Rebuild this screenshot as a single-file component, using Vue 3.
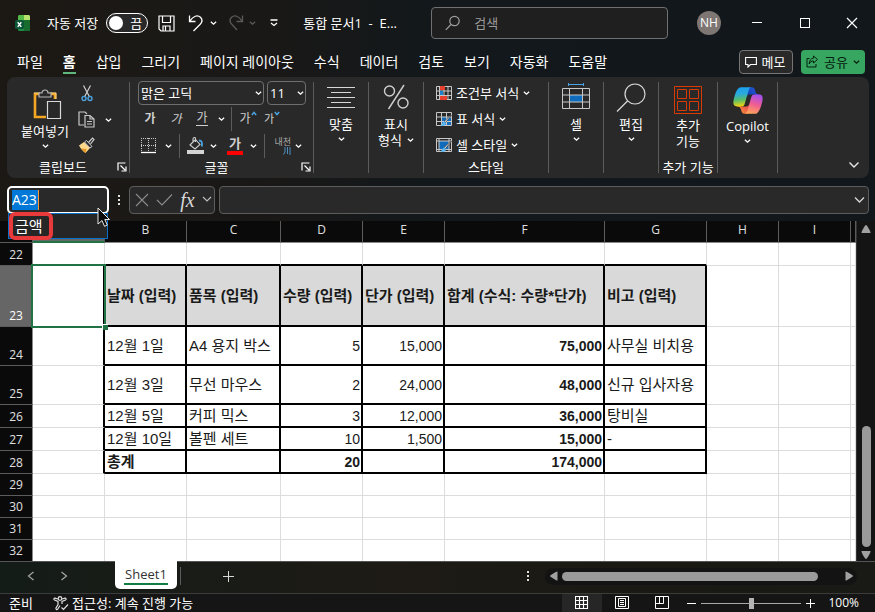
<script setup>
import { ref } from 'vue'

const tabs = ['파일', '홈', '삽입', '그리기', '페이지 레이아웃', '수식', '데이터', '검토', '보기', '자동화', '도움말']
const activeTab = ref('홈')
const autosave = ref(false)
const nameBox = ref('A23')
const formula = ref('')
const search = ref('')
const zoom = ref(50)

const columns = ['A', 'B', 'C', 'D', 'E', 'F', 'G', 'H', 'I', '']
const rows = [
  { n: 22, size: 'mid', cells: [] },
  { n: 23, size: 'tall', kind: 'head', cells: ['날짜 (입력)', '품목 (입력)', '수량 (입력)', '단가 (입력)', '합계 (수식: 수량*단가)', '비고 (입력)'] },
  { n: 24, size: 'high', kind: 'data', cells: ['12월 1일', 'A4 용지 박스', '5', '15,000', '75,000', '사무실 비치용'] },
  { n: 25, size: 'high', kind: 'data', cells: ['12월 3일', '무선 마우스', '2', '24,000', '48,000', '신규 입사자용'] },
  { n: 26, size: 'mid', kind: 'data', cells: ['12월 5일', '커피 믹스', '3', '12,000', '36,000', '탕비실'] },
  { n: 27, size: 'mid', kind: 'data', cells: ['12월 10일', '볼펜 세트', '10', '1,500', '15,000', '-'] },
  { n: 28, size: 'mid', kind: 'total', cells: ['총계', '', '20', '', '174,000', ''] },
  { n: 29, size: 'low', cells: [] },
  { n: 30, size: 'low', cells: [] },
  { n: 31, size: 'low', cells: [] },
  { n: 32, size: 'low', cells: [] }
]

function cellClass(row, i) {
  const inTable = row.kind && i >= 1 && i <= 6
  return {
    boxed: inTable,
    'edge-right': row.kind && i === 0,
    'edge-bottom': row.n === 22 && i >= 1 && i <= 6,
    shaded: inTable && row.kind === 'head',
    num: inTable && row.kind !== 'head' && i >= 3 && i <= 5,
    bold: inTable && (row.kind !== 'data' || i === 5)
  }
}
</script>

<template>
  <div class="window">
    <svg class="defs" aria-hidden="true">
      <symbol id="chev" viewBox="0 0 8 6"><path d="M1 1.500 4 4.300 7 1.500" fill="none" stroke="currentColor" stroke-width="1.500" /></symbol>
      <symbol id="launch" viewBox="0 0 10 10"><path d="M1 8.500V1H8.500M3.500 3.500 8 8M9 4.500V9H4.500" fill="none" stroke="currentColor" stroke-width="1.200" /></symbol>
      <symbol id="brush" viewBox="0 0 12 12"><path d="M11.500.5 5.500 7.500 4 6.500 10 .8z" fill="#d6d6d6" stroke="#292929" stroke-width=".6" /><path d="M4.500 6.500C2.500 6.500 2.500 9 .5 10.500c2.500 1 5.500 0 5.500-2.500z" fill="#5bb5f0" /></symbol>
    </svg>

    <header class="titlebar">
      <svg class="logo" viewBox="0 0 16 16" aria-hidden="true">
        <rect x="3" y="0" width="12" height="16" rx="1.500" fill="#1f8a43" />
        <path d="M4.500 0H9v5H3V1.500A1.500 1.500 0 0 1 4.500 0Z" fill="#55b947" />
        <path d="M9 0h4.500A1.500 1.500 0 0 1 15 1.500V5H9Z" fill="#b6e36b" />
        <path d="M9 5h6v9.500a1.500 1.500 0 0 1-1.500 1.500H9Z" fill="#176c2e" />
        <rect x="0" y="5" width="9" height="9" rx="1.500" fill="#0c5638" />
        <path d="m2.700 7.300 3.600 4.600M6.300 7.300l-3.600 4.600" stroke="#fff" stroke-width="1.400" />
      </svg>
      <label class="autosave">
        <span>자동 저장</span>
        <input v-model="autosave" type="checkbox" />
        <span class="toggle"><i></i>끔</span>
      </label>
      <button class="ic save" aria-label="저장">
        <svg width="17" height="17" viewBox="0 0 17 17"><path d="M1 1h15v15H3l-2-2zM4.500 1v6.500h8V1M5 16v-5h7v5M7.500 11v5" fill="none" stroke="currentColor" stroke-width="1.200" /></svg>
      </button>
      <button class="ic undo" aria-label="실행 취소">
        <svg width="17" height="18" viewBox="0 0 17 18"><path d="M1.500 1.500v6h6M1.800 7.200C5 2 9.500.5 12.500 3.300c2.500 2.700 1.500 5.200-.5 7.200L5.500 17" fill="none" stroke="currentColor" stroke-width="1.300" /></svg>
      </button>
      <button class="ic drop" aria-label="실행 취소 목록"><svg class="chev"><use href="#chev" /></svg></button>
      <button class="ic undo faded" aria-label="다시 실행">
        <svg width="17" height="18" viewBox="0 0 17 18"><path d="M15.500 1.500v6h-6M15.200 7.200C12 2 7.500.5 4.500 3.300 2 6 3 8.500 5 10.500l5 5.500" fill="none" stroke="currentColor" stroke-width="1.300" /></svg>
      </button>
      <button class="ic drop faded" aria-label="다시 실행 목록"><svg class="chev"><use href="#chev" /></svg></button>
      <button class="ic qat" aria-label="빠른 실행 도구 모음 사용자 지정">
        <svg width="10" height="8" viewBox="0 0 10 8"><path d="M1.500 1h7M2 4l3 2.500L8 4" fill="none" stroke="currentColor" stroke-width="1.300" /></svg>
      </button>
      <h1>통합 문서1&nbsp; -&nbsp; E...</h1>
      <label class="search">
        <svg width="16" height="16" viewBox="0 0 16 16" aria-hidden="true"><circle cx="9.500" cy="6" r="4.700" fill="none" stroke="#a0a0a0" stroke-width="1.200" /><path d="M6 9.500.8 14.800" stroke="#a0a0a0" stroke-width="1.200" /></svg>
        <input v-model="search" type="text" placeholder="검색" aria-label="검색" />
      </label>
      <button class="avatar" aria-label="계정">NH</button>
      <nav class="wincontrols">
        <button aria-label="최소화"><svg width="12" height="12" viewBox="0 0 12 12"><path d="M1 5.500h10" stroke="#fff" /></svg></button>
        <button aria-label="최대화"><svg width="12" height="12" viewBox="0 0 12 12"><rect x="1.500" y="1.500" width="9" height="9" fill="none" stroke="#fff" /></svg></button>
        <button aria-label="닫기"><svg width="12" height="12" viewBox="0 0 12 12"><path d="m1 1 10 10M11 1 1 11" stroke="#fff" stroke-width="1.200" /></svg></button>
      </nav>
    </header>

    <div class="tabrow">
      <nav class="tabs">
        <button v-for="t in tabs" :key="t" :class="{ active: t === activeTab }" @click="activeTab = t">{{ t }}</button>
      </nav>
      <button class="pill memo">
        <svg width="12" height="12" viewBox="0 0 12 12" aria-hidden="true"><path d="M.6 1.500h10.800v7H5.500L3 11V8.500H.6z" fill="none" stroke="currentColor" stroke-width="1.100" /></svg>
        메모
      </button>
      <button class="pill share">
        <svg width="13" height="13" viewBox="0 0 13 13" aria-hidden="true"><path d="M3.500 3.500H1v8.500h9V9M7.500 1l4 3.500-4 3.500V6C5.500 6 4 7 3.200 9c0-3.500 2-5.700 4.300-5.900z" fill="none" stroke="currentColor" /></svg>
        공유
        <svg class="chev"><use href="#chev" /></svg>
      </button>
    </div>

    <section class="ribbon">
      <div class="group clipboard">
        <div class="body">
          <button class="big paste">
            <svg width="30" height="32" viewBox="0 0 30 32" aria-hidden="true">
              <path d="M2 5h20v23H2z" fill="none" stroke="#f5a623" stroke-width="2.600" />
              <path d="M1 4h6M17 4h6v7" fill="none" stroke="#ffd98c" />
              <path d="M14 11h15v20H14z" fill="#292929" stroke="#292929" stroke-width="2" />
              <path d="M6 8V4h3c0-4 6-4 6 0h3v4z" fill="#292929" stroke="#b5b5b5" stroke-width="1.200" />
              <path d="M14.500 12.500h13v17h-13z" fill="#292929" stroke="#d8d8d8" stroke-width="1.200" />
            </svg>
            <span>붙여넣기</span>
            <svg class="chev"><use href="#chev" /></svg>
          </button>
          <div class="clipcol">
            <button class="ic" aria-label="잘라내기">
              <svg width="12" height="17" viewBox="0 0 12 17"><path d="m2.500.5 5.800 11M9.500.5 3.700 11.500" stroke="#d0d0d0" stroke-width="1.200" /><circle cx="3" cy="13.500" r="2" fill="none" stroke="#4aa3e0" stroke-width="1.400" /><circle cx="9" cy="13.500" r="2" fill="none" stroke="#4aa3e0" stroke-width="1.400" /></svg>
            </button>
            <div class="row">
              <button class="ic" aria-label="복사">
                <svg width="17" height="17" viewBox="0 0 17 17"><path d="M6 14H1V1h6l2 2M7 4.500h5l4 3.500v8H7zM12 4.500V8h4M9 10.500h5M9 13h5" fill="none" stroke="#c8c8c8" stroke-width="1.200" /></svg>
              </button>
              <button class="ic" aria-label="복사 옵션"><svg class="chev"><use href="#chev" /></svg></button>
            </div>
            <button class="ic" aria-label="서식 복사">
              <svg width="17" height="17" viewBox="0 0 17 17"><path d="M1 8.500 6 5l6 6-4.500 5C6 15 2.500 12 1 8.500Z" fill="#fbd98a" /><path d="M3 11.500 8.500 12 7.500 16Z" fill="#e6951f" /><path d="m6.500 5 2-1.500 5.500 6-2 1.500z" fill="#292929" stroke="#d0d0d0" /><path d="m10.500 5.500 4-4.500 1.500 1.500-3.500 4.500" fill="none" stroke="#d0d0d0" stroke-width="1.200" /></svg>
            </button>
          </div>
        </div>
        <footer><span>클립보드</span><button aria-label="클립보드 옵션"><svg width="10" height="10"><use href="#launch" /></svg></button></footer>
      </div>

      <div class="group font">
        <div class="fontrows">
          <div class="row selects">
            <div class="pick family"><select aria-label="글꼴"><option>맑은 고딕</option></select><svg class="chev"><use href="#chev" /></svg></div>
            <div class="pick size"><select aria-label="글꼴 크기"><option>11</option></select><svg class="chev"><use href="#chev" /></svg></div>
          </div>
          <div class="row tools">
            <button class="ic w26 b" aria-label="굵게">가</button>
            <button class="ic w26 i" aria-label="기울임꼴">가</button>
            <button class="ic w26 u" aria-label="밑줄"><span>가</span></button>
            <button class="ic w12" aria-label="밑줄 옵션"><svg class="chev"><use href="#chev" /></svg></button>
            <hr />
            <button class="ic w24 grow" aria-label="글꼴 크기 크게"><span>가</span><svg class="mark" viewBox="0 0 6 5"><path d="m.8 4 2.200-2.500L5.200 4" fill="none" stroke="#4aa3e0" stroke-width="1.500" /></svg></button>
            <button class="ic w24 shrink" aria-label="글꼴 크기 작게"><span>가</span><svg class="mark" viewBox="0 0 6 5"><path d="m.8 1 2.200 2.500L5.200 1" fill="none" stroke="#4aa3e0" stroke-width="1.500" /></svg></button>
          </div>
          <div class="row tools">
            <button class="ic w24" aria-label="테두리">
              <svg width="16" height="16" viewBox="0 0 16 16"><path d="M0 .5h15M0 7.500h15M.5 0v14M7.500 0v14M14.500 0v14" stroke="#c8c8c8" stroke-dasharray="1 1" /><path d="M0 14.500h15" stroke="#fff" stroke-width="1.300" /></svg>
            </button>
            <button class="ic w14" aria-label="테두리 옵션"><svg class="chev"><use href="#chev" /></svg></button>
            <hr />
            <button class="ic w22" aria-label="채우기 색">
              <svg width="17" height="18" viewBox="0 0 17 18"><path d="M3 8 8.500 2.500 13 7.500 8 12zM8.500 5V1.500C8.500 0 6 .3 6 2v3" fill="none" stroke="#d0d0d0" stroke-width="1.100" /><path d="M12 3.500c2.800 0 3.500 2 2.800 6" fill="none" stroke="#4aa3e0" stroke-width="1.800" /><path d="M0 13h17v4H0z" fill="#d4d4d4" /></svg>
            </button>
            <button class="ic w14" aria-label="채우기 색 옵션"><svg class="chev"><use href="#chev" /></svg></button>
            <button class="ic fontcolor" aria-label="글꼴 색"><span>가</span></button>
            <button class="ic w14" aria-label="글꼴 색 옵션"><svg class="chev"><use href="#chev" /></svg></button>
            <hr />
            <button class="ic w22 ruby" aria-label="윗주 필드"><span>내천</span><svg width="8" height="8" viewBox="0 0 8 8"><path d="M2 0v5L.5 7.500M4.500 0v7M7 0v8" fill="none" stroke="#4a8fc0" /></svg></button>
            <button class="ic w14" aria-label="윗주 옵션"><svg class="chev"><use href="#chev" /></svg></button>
          </div>
        </div>
        <footer><span>글꼴</span><button aria-label="글꼴 옵션"><svg width="10" height="10"><use href="#launch" /></svg></button></footer>
      </div>

      <div class="group narrow">
        <button class="big">
          <svg width="28" height="30" viewBox="0 0 28 30" aria-hidden="true"><path d="M0 5.500h28M4 10.500h20M0 15.500h28M4 20.500h20M0 25.500h28" stroke="#d8d8d8" /></svg>
          <span>맞춤</span><svg class="chev"><use href="#chev" /></svg>
        </button>
      </div>
      <div class="group narrow">
        <button class="big">
          <svg width="28" height="30" viewBox="0 0 28 30" aria-hidden="true"><g fill="none" stroke="#cfcfcf" stroke-width="1.400"><circle cx="7.500" cy="9" r="5" /><circle cx="21" cy="21" r="5" /><path d="M22 3 6.500 27" /></g></svg>
          <span>표시</span><span class="line">형식<svg class="chev"><use href="#chev" /></svg></span>
        </button>
      </div>

      <div class="group styles">
        <div class="stylelist">
          <button>
            <svg width="16" height="15" viewBox="0 0 16 15" aria-hidden="true"><path d="M.5.5h15v13H.5zM.5 5h15M.5 9.500h15M3.500.5v13M8 .5v13M12 .5v13" fill="none" stroke="#c8c8c8" /><path d="M4 0h5v4H4zM4 10h7v4H4z" fill="#e8402f" /><path d="M4 5h3v4H4z" fill="#1c7fd0" /></svg>
            조건부 서식<svg class="chev"><use href="#chev" /></svg>
          </button>
          <button>
            <svg width="16" height="15" viewBox="0 0 16 15" aria-hidden="true"><path d="M6 5h9v9H6z" fill="#0f6cbd" /><path d="M.5.5h15v13H.5zM.5 5h15M.5 9.500h15M5.500.5v13M10.500.5v13" fill="none" stroke="#c8c8c8" /><svg x="4" y="3" width="12" height="12"><use href="#brush" /></svg></svg>
            표 서식<svg class="chev"><use href="#chev" /></svg>
          </button>
          <button>
            <svg width="16" height="15" viewBox="0 0 16 15" aria-hidden="true"><path d="M3 3h10v9H3z" fill="#0f6cbd" /><path d="M.5.5h15v13H.5zM.5 3h15M.5 11.500h15M3 .5v13M13 .5v13" fill="none" stroke="#c8c8c8" /><svg x="4" y="3" width="12" height="12"><use href="#brush" /></svg></svg>
            셀 스타일<svg class="chev"><use href="#chev" /></svg>
          </button>
        </div>
        <footer><span>스타일</span></footer>
      </div>

      <div class="group narrow">
        <button class="big">
          <svg width="28" height="30" viewBox="0 0 28 30" aria-hidden="true"><path d="M6.500 1v3M21.500 1v3M6.500 2.500h15" stroke="#4aa3e0" fill="none" /><path d="M7 13h14v7H7z" fill="#0f6cbd" /><path d="M.5 6.500h27v20H.5zM.5 13h27M.5 20h27M7.500 6.500v20M20.500 6.500v20" fill="none" stroke="#c8c8c8" /></svg>
          <span>셀</span><svg class="chev"><use href="#chev" /></svg>
        </button>
      </div>
      <div class="group narrow">
        <button class="big">
          <svg width="30" height="30" viewBox="0 0 30 30" aria-hidden="true"><g fill="none" stroke="#d8d8d8" stroke-width="1.200"><circle cx="19" cy="12" r="10" /><path d="M11.500 19 1 29.500" /></g></svg>
          <span>편집</span><svg class="chev"><use href="#chev" /></svg>
        </button>
      </div>
      <div class="group addins">
        <button class="big lower">
          <svg width="28" height="28" viewBox="0 0 28 28" aria-hidden="true"><path d="M.5.5h27v27H.5zM3.500 3.500h9v9h-9zM15.500 3.500h9v9h-9zM3.500 15.500h9v9h-9zM15.500 15.500h9v9h-9z" fill="none" stroke="#d83b01" /></svg>
          <span class="two">추가<br />기능</span>
        </button>
        <footer><span>추가 기능</span></footer>
      </div>
      <div class="group copilot">
        <button class="big lower">
          <svg width="32" height="29" viewBox="0 3 48 42" aria-hidden="true">
            <defs>
              <linearGradient id="cpA" x1="0.300" y1="0" x2="0.400" y2="1"><stop offset="0" stop-color="#1aa0ee" /><stop offset=".35" stop-color="#2aa9dd" /><stop offset=".65" stop-color="#55bc6c" /><stop offset="1" stop-color="#f3d60a" /></linearGradient>
              <linearGradient id="cpB" x1="0.700" y1="0" x2="0.400" y2="1"><stop offset="0" stop-color="#a34ff0" /><stop offset=".5" stop-color="#ef5d93" /><stop offset="1" stop-color="#ffa45c" /></linearGradient>
              <linearGradient id="cpC" x1="1" y1="0" x2="0" y2="1"><stop offset="0" stop-color="#2a5be0" /><stop offset="1" stop-color="#0a3ca8" /></linearGradient>
              <linearGradient id="cpD" x1="0" y1="1" x2="1" y2="0"><stop offset="0" stop-color="#f9a03a" /><stop offset="1" stop-color="#e5344f" /></linearGradient>
            </defs>
            <path fill="url(#cpC)" d="M34.142 7.325A4.630 4.630 0 0 0 29.700 4H28.350a4.630 4.630 0 0 0-4.554 3.794L21.480 20.407l.575-1.965a4.630 4.630 0 0 1 4.444-3.330h7.853l3.294 1.282 3.175-1.283h-.926a4.630 4.630 0 0 1-4.443-3.325Z" />
            <path fill="url(#cpD)" d="M14.330 40.656A4.630 4.630 0 0 0 18.779 44h2.870a4.630 4.630 0 0 0 4.629-4.510l.312-12.163-.654 2.233a4.630 4.630 0 0 1-4.443 3.329h-7.919l-2.823-1.532-3.057 1.532h.912a4.630 4.630 0 0 1 4.447 3.344Z" />
            <path fill="url(#cpA)" d="M29.500 4H13.460c-4.583 0-7.332 6.057-9.165 12.113C2.123 23.290-.72 32.885 7.503 32.885h6.925a4.630 4.630 0 0 0 4.456-3.358 2078 2078 0 0 1 4.971-17.156c.843-2.843 1.544-5.284 2.621-6.805C27.080 4.714 28.086 4 29.500 4Z" />
            <path fill="url(#cpB)" d="M18.498 44h16.040c4.582 0 7.332-6.058 9.165-12.115 2.171-7.177 5.013-16.775-3.208-16.775h-6.926a4.630 4.630 0 0 0-4.455 3.358 2084 2084 0 0 1-4.972 17.160c-.842 2.843-1.544 5.285-2.620 6.806-.604.852-1.610 1.566-3.024 1.566Z" />
          </svg>
          <span>Copilot</span><svg class="chev"><use href="#chev" /></svg>
        </button>
      </div>
      <button class="collapse" aria-label="리본 축소"><svg width="12" height="8" viewBox="0 0 12 8"><path d="m1.500 1.500 4.500 4.500 4.500-4.500" fill="none" stroke="#e8e8e8" stroke-width="1.400" /></svg></button>
    </section>

    <div class="formulabar">
      <div class="namebox">
        <input v-model="nameBox" type="text" aria-label="이름 상자" />
        <ul class="names">
          <li>금액</li>
        </ul>
        <svg class="pointer" width="14" height="21" viewBox="0 0 14 21" aria-hidden="true"><path d="M1 1v16l4-3.500 2.500 5.800 2.800-1.200L7.800 12.500H12.500z" fill="#0a0a0a" stroke="#e8e8e8" /></svg>
      </div>
      <span class="dots"><i></i><i></i><i></i></span>
      <div class="fx">
        <button aria-label="취소"><svg width="14" height="14" viewBox="0 0 14 14"><path d="m1 1 12 12M13 1 1 13" stroke="#8c8c8c" stroke-width="1.100" /></svg></button>
        <button aria-label="입력"><svg width="17" height="14" viewBox="0 0 17 14"><path d="m1 7 5 5L16 1.500" fill="none" stroke="#8c8c8c" stroke-width="1.100" /></svg></button>
        <button class="fn" aria-label="함수 삽입">fx</button>
        <button aria-label="함수 목록"><svg width="10" height="7" viewBox="0 0 10 7"><path d="m1 1 4 4 4-4" fill="none" stroke="#c0c0c0" stroke-width="1.100" /></svg></button>
      </div>
      <div class="formula">
        <input v-model="formula" type="text" aria-label="수식 입력줄" />
        <button aria-label="수식 입력줄 확장"><svg width="11" height="8" viewBox="0 0 11 8"><path d="m1 1.500 4.500 4.500L10 1.500" fill="none" stroke="#d8d8d8" stroke-width="1.300" /></svg></button>
      </div>
    </div>

    <main class="sheet">
      <div class="cells">
        <table>
          <colgroup>
            <col class="c-n" /><col class="c-a" /><col class="c-b" /><col class="c-c" /><col class="c-b" /><col class="c-b" /><col class="c-f" /><col class="c-g" /><col class="c-a" /><col class="c-a" /><col />
          </colgroup>
          <thead>
            <tr>
              <td class="corner"></td>
              <th v-for="(c, i) in columns" :key="i" scope="col" :class="{ on: i === 0 }">{{ c }}</th>
            </tr>
          </thead>
          <tbody>
            <tr v-for="r in rows" :key="r.n" :class="r.size">
              <th scope="row" :class="{ on: r.n === 23 }">{{ r.n }}</th>
              <td v-for="(c, i) in columns" :key="i" :class="cellClass(r, i)">
                <template v-if="i > 0">{{ r.cells[i - 1] }}</template>
                <span v-else-if="r.n === 23" class="selection"></span>
              </td>
            </tr>
          </tbody>
        </table>
      </div>
      <div class="vscroll">
        <button aria-label="위로"><svg width="10" height="8" viewBox="0 0 10 8"><path d="M5 0c1 0 5 7 4.500 8h-9C0 7 4 0 5 0Z" fill="#a0a0a0" /></svg></button>
        <div class="vtrack"><span></span></div>
        <button aria-label="아래로"><svg width="10" height="8" viewBox="0 0 10 8"><path d="M5 8C4 8 0 1 .5 0h9C10 1 6 8 5 8Z" fill="#a0a0a0" /></svg></button>
      </div>
    </main>

    <div class="sheetbar">
      <button class="step" aria-label="이전 시트"><svg width="8" height="10" viewBox="0 0 8 10"><path d="M6.500 1 1.500 5l5 4" fill="none" stroke="#a8a8a8" stroke-width="1.200" /></svg></button>
      <button class="step" aria-label="다음 시트"><svg width="8" height="10" viewBox="0 0 8 10"><path d="m1.500 1 5 4-5 4" fill="none" stroke="#a8a8a8" stroke-width="1.200" /></svg></button>
      <button class="sheettab"><span>Sheet1</span></button>
      <hr />
      <button class="add" aria-label="새 시트"><svg width="12" height="12" viewBox="0 0 12 12"><path d="M6.500 1v11M1 6.500h11" stroke="#d8d8d8" /></svg></button>
      <span class="dots push"><i></i><i></i><i></i></span>
      <div class="hscroll">
        <button aria-label="왼쪽으로"><svg width="8" height="10" viewBox="0 0 8 10"><path d="M0 5c0-1 7-5 7.500-4.500v9C7 10 0 6 0 5Z" fill="#a0a0a0" /></svg></button>
        <div class="htrack"><span></span></div>
        <button aria-label="오른쪽으로"><svg width="8" height="10" viewBox="0 0 8 10"><path d="M8 5C8 4 1 0 .5.5v9C1 10 8 6 8 5Z" fill="#a0a0a0" /></svg></button>
      </div>
    </div>

    <footer class="status">
      <span class="ready">준비</span>
      <button class="access">
        <svg width="16" height="15" viewBox="0 0 16 15" aria-hidden="true"><g fill="none" stroke="#e0e0e0" stroke-width="1.200"><circle cx="7" cy="2.500" r="1.800" /><path d="M5 3 2 2.200C.8 2 .5 3.500 1.500 4L5 5.500v3L3 12c-.5 1.500 1 2.300 1.800 1L7 9.500M9 3l3-.8c1.200-.2 1.500 1.300.5 1.800L9 5.500V8M8.500 11.500l2 2 4.500-5" /></g></svg>
        접근성: 계속 진행 가능
      </button>
      <div class="views">
        <button class="on" aria-label="기본"><svg width="14" height="14" viewBox="0 0 14 14"><path d="M.5.5h12v12H.5zM.5 4.500h12M.5 8.500h12M4.500.5v12M8.500.5v12" fill="none" stroke="#fff" stroke-width="1.100" /></svg></button>
        <button aria-label="페이지 레이아웃"><svg width="14" height="14" viewBox="0 0 14 14"><path d="M.5.5h13v12H.5zM3.500 2.500h7v8h-7zM5 4.500h4M5 6.500h4M5 8.500h4" fill="none" stroke="#fff" /></svg></button>
        <button aria-label="페이지 나누기 미리 보기"><svg width="14" height="14" viewBox="0 0 14 14"><path d="M.5.5h13v12H.5zM4.500.5v7M.5 7.500h8v-7" fill="none" stroke="#fff" /></svg></button>
      </div>
      <button class="zoomstep" aria-label="축소"><svg width="9" height="9" viewBox="0 0 9 9"><path d="M0 4.500h9" stroke="#fff" /></svg></button>
      <input v-model="zoom" type="range" min="0" max="100" aria-label="확대/축소" />
      <button class="zoomstep" aria-label="확대"><svg width="9" height="9" viewBox="0 0 9 9"><path d="M0 4.500h9M4.500 0v9" stroke="#fff" /></svg></button>
      <button class="percent">100%</button>
    </footer>
  </div>
</template>

<style>
body {
  margin: 0;
  background: #15181a;
}
</style>

<style scoped>
.window {
  display: flex;
  flex-direction: column;
  min-height: 100vh;
  overflow: hidden;
  background: linear-gradient(90deg, #1c1914 0, #1a1817 30%, #12181b 50%, #12171b 100%);
  color: #fff;
  font: 13px/16px "Open Sans", "Noto Sans CJK KR", sans-serif;
}
.window * { box-sizing: border-box; }
.defs { position: absolute; width: 0; height: 0; }
button, input, select { font: inherit; color: inherit; }
button { display: flex; align-items: center; justify-content: center; padding: 0; border: 0; background: none; white-space: nowrap; }
svg { flex: none; display: block; }
hr { flex: none; width: 1px; height: 24px; margin: 0 4px; border: 0; background: #5c5c5c; }
.chev { width: 7px; height: 6px; }
.row { display: flex; align-items: center; }

/* title bar */
.titlebar { display: flex; align-items: center; height: 46px; padding-left: 15px; }
.logo { width: 16px; height: 16px; }
.autosave { display: flex; align-items: center; gap: 8px; margin-left: 16px; white-space: nowrap; }
.autosave input { position: absolute; opacity: 0; pointer-events: none; }
.toggle { display: flex; align-items: center; gap: 7px; width: 42px; height: 20px; padding-left: 2px; border: 1px solid #fff; border-radius: 10px; background: #292929; }
.toggle i { width: 14px; height: 14px; border-radius: 50%; background: #fff; }
.ic { flex: none; }
.save { margin-left: 10px; }
.undo { margin-left: 13px; }
.drop { width: 12px; margin-left: 2px; }
.faded { color: #5a5a5a; }
.drop + .undo { margin-left: 8px; }
.qat { margin-left: 11px; }
h1 { width: 98px; margin: 0 0 0 24px; overflow: hidden; font: inherit; white-space: nowrap; }
.search { display: flex; flex: 0 1 237px; align-items: center; gap: 13px; height: 32px; margin-left: 30px; padding-left: 13px; border: 1px solid #707070; border-radius: 4px; background: #1f1f1f; }
.search input { flex: 1; min-width: 0; border: 0; outline: 0; padding: 0; background: none; }
.search input::placeholder { color: #9a9a9a; opacity: 1; }
.avatar { flex: none; width: 24px; height: 24px; margin-left: auto; border-radius: 50%; background: #7d7673; font-size: 12px; }
.wincontrols { display: flex; margin-left: 12px; }
.wincontrols button { width: 48px; height: 32px; }
.wincontrols button:last-child { width: 46px; }

/* ribbon tabs */
.tabrow { display: flex; align-items: center; height: 31px; padding: 0 10px 0 17px; }
.tabs { display: flex; flex: 1; gap: 20px; height: 31px; font-size: 14px; }
.tabs button { border: solid transparent; border-width: 0 0 2px; height: 28px; padding-top: 5px; }
.tabs .active { border-color: #5fb77e; font-weight: 700; }
.pill { gap: 5px; height: 24px; border-radius: 4px; }
.memo { width: 54px; padding-right: 2px; border: 1px solid #757575; background: #292929; }
.share { width: 64px; margin-left: 8px; background: #37a660; color: #06200f; }

/* ribbon */
.ribbon { display: flex; height: 101px; margin: 0 6px 0 7px; padding: 5px 0; border-radius: 8px; background: #292929; }
.group { display: flex; flex-direction: column; flex: none; border-right: 1px solid #5c5c5c; }
.clipboard { width: 123px; }
.font { width: 184px; }
.narrow { width: 55px; }
.styles { width: 125px; }
.addins { width: 59px; }
.copilot { width: 60px; }
.group footer { display: flex; align-items: center; height: 16px; margin-top: auto; margin-bottom: -2px; padding: 0 2px; }
.group footer span { flex: 1; text-align: center; white-space: nowrap; }
.group footer button { width: 10px; height: 10px; }
.body { display: flex; }
.big { flex-direction: column; width: 100%; }
.big .chev { margin-top: 4px; }
.big span { height: 16px; }
.big > span:first-of-type { margin-top: 4px; }
.big.lower > span { margin-top: 3px; }
.big .two { height: 32px; }
.lower { padding-top: 4px; }
.line { display: flex; align-items: center; gap: 5px; }
.big .line .chev { margin: 0; }
.big.paste { width: 76px; }
.big.paste > span { margin-top: 2px; }
.paste > svg:first-child { margin-left: 5px; }
.paste { padding-top: 2px; }
.clipcol { display: flex; flex-direction: column; align-items: flex-start; gap: 9px; padding-top: 3px; }
.clipcol .ic { min-width: 17px; height: 17px; margin-left: -5px; }
.clipcol .row .ic + .ic { margin-left: 5px; }
.fontrows { display: flex; flex-direction: column; padding-left: 8px; }
.selects { gap: 3px; height: 24px; margin-top: -1px; }
.pick { position: relative; display: flex; align-items: center; height: 24px; }
.pick select { width: 100%; height: 100%; padding: 0 2px; border: 1px solid #6e6e6e; border-radius: 4px; background: #292929; appearance: none; }
.pick .chev { position: absolute; right: 2px; pointer-events: none; }
.family { width: 126px; }
.size { width: 39px; }
.tools { height: 27px; margin-left: -1px; color: #d0d0d0; font-size: 12px; }
.tools .chev { color: #fff; }
.w26 { width: 26px; }
.w24 { width: 24px; }
.w22 { width: 22px; }
.w14 { width: 14px; }
.w12 { width: 12px; }
.b { font-weight: 700; }
.i { font-style: italic; }
.u span { height: 15px; border-bottom: 1px solid #d0d0d0; line-height: 13px; }
.grow, .shrink { align-items: flex-start; }
.mark { width: 6px; height: 5px; }
.shrink { font-size: 11px; }
.fontcolor { width: 22px; margin-left: 4px; font-weight: 700; }
.fontcolor span { width: 16px; height: 18px; border-bottom: 4px solid #f00; font-size: 13px; line-height: 12px; }
.ruby { flex-direction: column; align-items: flex-end; color: #a8a8a8; font-size: 9px; line-height: 10px; }
.stylelist { display: flex; flex-direction: column; margin-top: -1px; padding: 0 0 0 12px; }
.stylelist button { gap: 4px; align-self: flex-start; height: 26px; margin-top: -1px; margin-bottom: 1px; }
.collapse { align-self: flex-end; width: 18px; height: 16px; margin-left: auto; margin-right: 6px; }

/* formula bar */
.formulabar { display: flex; align-items: center; height: 43px; padding: 0 6px 0 7px; }
.namebox { position: relative; flex: none; width: 102px; height: 28px; }
.namebox input { display: block; width: 100%; height: 28px; padding: 0 3px; border: 2px solid #fff; border-radius: 5px; outline: 0; background: linear-gradient(#ff9a3c, #ff9a3c) 29px 2px / 1px 20px no-repeat, linear-gradient(#0078d7, #0078d7) 3px 2px / 26px 20px no-repeat, #292929; font-size: 14px; }
.names { position: absolute; z-index: 3; top: 27px; left: 1px; width: 100px; height: 26px; margin: 0; padding: 0; border: 1px solid #0a6fcb; background: #262626; list-style: none; }
.names li { width: 44px; height: 28px; margin: -2px 0 0; padding-left: 2px; border: 4px solid #e8393b; border-radius: 6px; font-size: 15px; line-height: 20px; }
.pointer { position: absolute; z-index: 4; top: 21px; left: 90px; }
.dots { display: flex; flex-direction: column; gap: 2px; flex: none; width: 2px; margin: 0 9px; }
.dots i { width: 2px; height: 2px; background: #e0e0e0; }
.fx { display: flex; flex: none; align-items: center; width: 86px; height: 28px; margin-right: 4px; padding: 0 2px 0 3px; gap: 5px; border: 1px solid #5c5c5c; border-radius: 4px; background: #292929; }
.fx button:first-child { width: 18px; }
.fx .fn { width: 19px; font: italic 20px/20px "Liberation Serif", serif; color: #d8d8d8; }
.formula { display: flex; flex: 1; height: 28px; border: 1px solid #5c5c5c; border-radius: 4px; background: #292929; }
.formula input { flex: 1; min-width: 0; border: 0; outline: 0; background: none; }
.formula button { width: 18px; }

/* sheet */
.sheet { display: flex; flex: 1; background: #fff; }
.cells { flex: 1; min-width: 0; overflow: hidden; }
table { width: 100%; border-spacing: 0; table-layout: fixed; color: #1a1a1a; font: 15px/18px "Liberation Sans", "Noto Sans CJK KR", sans-serif; }
.c-n { width: 33px; }
.c-a { width: 72px; }
.c-b { width: 82px; }
.c-c { width: 94px; }
.c-f { width: 160px; }
.c-g { width: 102px; }
th, td { padding: 0; border: solid #dcdcdc; border-width: 0 1px 1px 0; overflow: hidden; white-space: nowrap; }
th, .corner { background: #0a0a0a; border-color: #5c5c5c; color: #e0e0e0; font: 12px/16px "Open Sans", sans-serif; }
thead th { height: 22px; padding-bottom: 3px; border-bottom-color: #8a8a8a; }
thead th.on { border-bottom: 2px solid #217346; }
tbody th { vertical-align: bottom; padding-bottom: 2px; border-right-color: #8a8a8a; }
tbody th.on, thead th.on { background: #666; color: #fff; }
.low > * { height: 22px; }
.mid > * { height: 23px; }
.high > * { height: 39px; }
.tall > * { height: 61px; }
td { position: relative; padding: 0 2px; overflow: visible; }
td.boxed { border: solid #000; border-width: 0 2px 2px 0; }
td.edge-right { border-right: 2px solid #000; }
td.edge-bottom { border-bottom: 2px solid #000; }
.shaded { background: #d9d9d9; }
td.num { font-size: 14px; text-align: right; padding: 0 1px; }
.bold { font-weight: 700; }
.selection { position: absolute; z-index: 2; inset: -2px -3px -2px -2px; border: 2px solid #217346; }
.selection::after { content: ""; position: absolute; right: -4px; bottom: -4px; width: 5px; height: 5px; border: solid #fff; border-width: 1px 0 0 1px; background: #217346; box-sizing: content-box; }
.vscroll { display: flex; flex-direction: column; align-items: center; width: 19px; border-left: 1px solid #333; background: #141414; }
.vscroll button { width: 18px; height: 15px; }
.vtrack { display: flex; flex: 1; align-items: flex-end; }
.vtrack span { width: 9px; height: 39%; border-radius: 5px; background: #9a9a9a; }

/* sheet tabs */
.sheetbar { display: flex; align-items: center; height: 32px; margin-top: -1px; padding: 0 18px 3px 14px; border-top: 1px solid #555; background: linear-gradient(90deg, #141c17, #1e1b16 45%, #1a1914 70%, #191a15); z-index: 1; }
.step { flex: none; width: 33px; height: 24px; }
.sheettab { flex: none; align-self: flex-start; width: 62px; height: 28px; margin: -1px 0 0 35px; border-radius: 0 0 5px 5px; background: #fff; color: #333; }
.sheettab span { padding: 0 1px; border-bottom: 2px solid #107c41; line-height: 18px; }
.sheetbar hr { height: 18px; margin: 0 0 0 3px; }
.add { flex: none; width: 24px; height: 24px; margin-left: 35px; }
.push { margin: 0 16px 0 auto; }
.hscroll { display: flex; align-items: center; flex: 0 1 312px; height: 17px; border-radius: 9px; background: #131313; }
.hscroll button { width: 17px; height: 17px; }
.htrack { display: flex; flex: 1; }
.htrack span { width: 92%; height: 9px; border-radius: 5px; background: #9a9a9a; }

/* status bar */
.status { display: flex; align-items: center; height: 19px; padding: 0 16px 0 9px; border-top: 1px solid #3c3c3c; background: #151515; }
.ready { width: 44px; }
.access { gap: 3px; }
.views { display: flex; margin-left: auto; }
.views button { width: 40px; height: 18px; }
.views .on { background: #262626; }
.zoomstep { width: 9px; margin: 0 5px; }
input[type="range"] { width: 100px; height: 18px; margin: 0; appearance: none; background: linear-gradient(#a8a8a8, #a8a8a8) center / 100% 1px no-repeat; }
input[type="range"]::-webkit-slider-thumb { appearance: none; width: 5px; height: 11px; background: #b4b4b4; }
.percent { margin-left: 8px; font-size: 12px; }
</style>
